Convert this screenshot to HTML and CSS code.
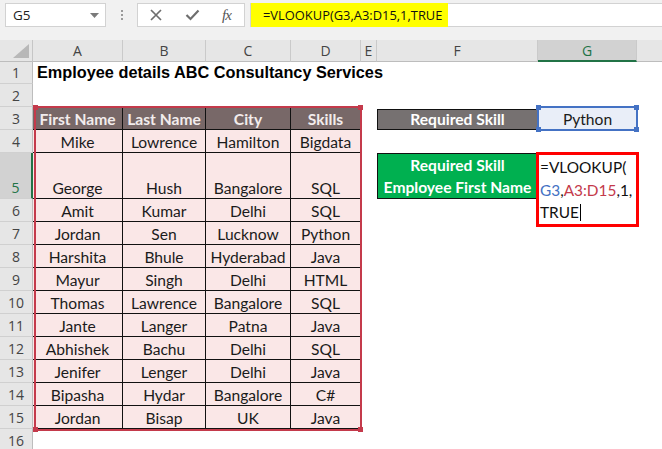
FILE: index.html
```html
<!DOCTYPE html>
<html>
<head>
<meta charset="utf-8">
<link rel="stylesheet" href="styles.css">
</head>
<body>
<div class="app">
  <div class="toolbar">
    <div class="namebox"><span class="ref">G5</span><svg class="caret" width="9" height="5" viewBox="0 0 9 5"><path d="M0 0h9L4.5 5z" fill="#7a7a7a"/></svg></div>
    <div class="grip"><i></i><i></i><i></i></div>
    <div class="fnbox">
      <svg class="ico-x" width="12" height="12" viewBox="0 0 12 12"><path d="M1 1L11 11M11 1L1 11" stroke="#6e6e6e" stroke-width="1.7" fill="none"/></svg>
      <svg class="ico-ok" width="15" height="12" viewBox="0 0 15 12"><path d="M1.5 6L5.5 10L13.5 1.5" stroke="#6e6e6e" stroke-width="2.2" fill="none"/></svg>
      <span class="fx">fx</span>
    </div>
    <div class="formula"><span class="hl">=VLOOKUP(G3,A3:D15,1,TRUE</span></div>
  </div>

  <div class="sheet">
    <div class="row hdr">
      <div class="corner"><svg width="16" height="14" viewBox="0 0 16 14"><path d="M16 0V14H0z" fill="#b8b8b8"/></svg></div>
      <div class="ch">A</div><div class="ch">B</div><div class="ch">C</div><div class="ch">D</div><div class="ch">E</div><div class="ch">F</div><div class="ch sel">G</div><div class="ch last"></div>
    </div>
    <div class="row r22"><div class="rh">1</div><div class="title">Employee details ABC Consultancy Services</div></div>
    <div class="row"><div class="rh">2</div></div>
    <div class="row">
      <div class="rh">3</div>
      <div class="t th">First Name</div><div class="t th">Last Name</div><div class="t th">City</div><div class="t th">Skills</div>
      <div class="cf lbl gray">Required Skill</div>
      <div class="cg py">Python</div>
    </div>
    <div class="row"><div class="rh">4</div><div class="t">Mike</div><div class="t">Lowrence</div><div class="t">Hamilton</div><div class="t">Bigdata</div></div>
    <div class="row r46">
      <div class="rh sel">5</div><div class="t">George</div><div class="t">Hush</div><div class="t">Bangalore</div><div class="t">SQL</div>
      <div class="cf lbl green"><span>Required Skill</span><span>Employee First Name</span></div>
    </div>
    <div class="row"><div class="rh">6</div><div class="t">Amit</div><div class="t">Kumar</div><div class="t">Delhi</div><div class="t">SQL</div></div>
    <div class="row"><div class="rh">7</div><div class="t">Jordan</div><div class="t">Sen</div><div class="t">Lucknow</div><div class="t">Python</div></div>
    <div class="row"><div class="rh">8</div><div class="t">Harshita</div><div class="t">Bhule</div><div class="t">Hyderabad</div><div class="t">Java</div></div>
    <div class="row"><div class="rh">9</div><div class="t">Mayur</div><div class="t">Singh</div><div class="t">Delhi</div><div class="t">HTML</div></div>
    <div class="row"><div class="rh">10</div><div class="t">Thomas</div><div class="t">Lawrence</div><div class="t">Bangalore</div><div class="t">SQL</div></div>
    <div class="row"><div class="rh">11</div><div class="t">Jante</div><div class="t">Langer</div><div class="t">Patna</div><div class="t">Java</div></div>
    <div class="row"><div class="rh">12</div><div class="t">Abhishek</div><div class="t">Bachu</div><div class="t">Delhi</div><div class="t">SQL</div></div>
    <div class="row"><div class="rh">13</div><div class="t">Jenifer</div><div class="t">Lenger</div><div class="t">Delhi</div><div class="t">Java</div></div>
    <div class="row"><div class="rh">14</div><div class="t">Bipasha</div><div class="t">Hydar</div><div class="t">Bangalore</div><div class="t">C#</div></div>
    <div class="row"><div class="rh">15</div><div class="t">Jordan</div><div class="t">Bisap</div><div class="t">UK</div><div class="t">Java</div></div>
    <div class="row"><div class="rh">16</div></div>

    <div class="range"><i class="h tl"></i><i class="h tr"></i><i class="h bl"></i><i class="h br"></i></div>
    <div class="selbox"><i class="h tl"></i><i class="h tr"></i><i class="h bl"></i><i class="h br"></i></div>
    <div class="edit">
      <div>=VLOOKUP(</div>
      <div><span class="blue">G3</span>,<span class="red">A3:D15</span>,1,</div>
      <div>TRUE<span class="cursor"></span></div>
    </div>
  </div>
</div>
</body>
</html>
```

FILE: styles.css
```css
* { box-sizing: border-box; }
html, body { margin: 0; padding: 0; }
body { width: 662px; height: 449px; overflow: hidden; background: #fff; font-family: "Lato", "Liberation Sans", sans-serif; }

.app { width: 662px; }

.toolbar {
  height: 40px;
  background: #f1f1f1;
  display: flex;
  align-items: flex-start;
  padding-top: 3px;
}
.namebox {
  margin-left: 5px;
  width: 101px;
  height: 24px;
  background: #fff;
  border: 1px solid #d2d2d2;
  display: flex;
  align-items: center;
  justify-content: space-between;
  padding: 0 6px 0 7px;
  font: 13.5px "Open Sans", sans-serif;
  color: #222;
}
.grip {
  width: 31px;
  height: 24px;
  display: flex;
  flex-direction: column;
  align-items: center;
  justify-content: center;
  gap: 2px;
}
.grip i { display: block; width: 2px; height: 2px; background: #9a9a9a; }
.fnbox {
  width: 108px;
  height: 24px;
  background: #fff;
  border: 1px solid #d2d2d2;
  display: flex;
  align-items: center;
  padding-left: 12px;
}
.ico-ok { margin-left: 23px; }
.fx {
  margin-left: 22px;
  font: italic 15px "Liberation Serif", serif;
  color: #555;
  letter-spacing: -1px;
}
.formula {
  margin-left: 5px;
  flex: 1;
  height: 24px;
  background: #fff;
  border: 1px solid #d2d2d2;
  border-right: none;
}
.hl {
  display: flex;
  align-items: center;
  width: 197px;
  height: 24px;
  margin-top: -1px;
  background: #ffff00;
  padding-left: 12px;
  font: 12.9px "Open Sans", sans-serif;
  color: #111;
  white-space: nowrap;
}

.sheet { position: relative; }
.row {
  display: grid;
  grid-template-columns: 33px 90px 83px 85px 70px 16px 161px 99px 1fr;
  grid-template-rows: 100%;
  height: 23px;
}
.row.r22 { height: 22px; }
.row.r46 { height: 46px; }
.row.hdr { height: 22px; background: #e6e6e6; }

.corner {
  border-right: 1px solid #c6c6c6;
  border-bottom: 1px solid #bdbdbd;
  display: flex;
  align-items: flex-end;
  justify-content: flex-end;
  padding: 0 3px 3px 0;
}
.ch {
  border-right: 1px solid #cacaca;
  border-bottom: 1px solid #bdbdbd;
  display: flex;
  align-items: center;
  justify-content: center;
  font: 14px "Open Sans", sans-serif;
  color: #444;
}
.ch.last { border-right: none; }
.ch.sel { background: #d2d2d2; color: #217346; border-bottom: 2px solid #217346; }

.rh {
  grid-column: 1;
  background: #e6e6e6;
  border-right: 1px solid #bdbdbd;
  border-bottom: 1px solid #d0d0d0;
  display: flex;
  align-items: flex-end;
  justify-content: center;
  padding-bottom: 1px;
  font: 14px "Open Sans", sans-serif;
  color: #444;
}
.rh.sel { background: #d2d2d2; color: #217346; border-right: 2px solid #217346; }

.title {
  grid-column: 2 / -1;
  display: flex;
  align-items: flex-end;
  padding: 0 0 2px 4px;
  font: bold 16.3px "Liberation Sans", Arial, sans-serif;
  color: #000;
  white-space: nowrap;
}

.t {
  background: #fae7e7;
  border-right: 1px solid #111;
  border-bottom: 1px solid #111;
  display: flex;
  align-items: flex-end;
  justify-content: center;
  padding-bottom: 1px;
  font-size: 15.6px;
  color: #1b1b1b;
  white-space: nowrap;
}
.t.th {
  background: #786868;
  color: #f2ecec;
  font-weight: bold;
}

.cf { grid-column: 7; }
.cg { grid-column: 8; }
.lbl {
  border: 1px solid #111;
  color: #fff;
  font-weight: bold;
  font-size: 15.6px;
  display: flex;
  flex-direction: column;
  align-items: center;
  justify-content: flex-end;
  white-space: nowrap;
}
.lbl.gray { background: #767171; margin-top: 2px; padding-bottom: 1px; }
.lbl.green { background: #00b050; justify-content: center; line-height: 22px; padding-bottom: 1px; }
.py {
  background: #e9eef8;
  display: flex;
  align-items: flex-end;
  justify-content: center;
  padding-bottom: 2px;
  font-size: 15.6px;
  color: #1b1b1b;
}

.range {
  position: absolute;
  left: 34px; top: 66px; width: 328px; height: 325px;
  border: 2px solid #c43a4b;
}
.selbox {
  position: absolute;
  left: 537px; top: 66px; width: 101px; height: 25px;
  border: 2px solid #4472c4;
}
.h { position: absolute; width: 5px; height: 5px; }
.range .h { background: #c43a4b; }
.selbox .h { background: #4472c4; }
.h.tl { left: -3px; top: -3px; }
.h.tr { right: -3px; top: -3px; }
.h.bl { left: -3px; bottom: -3px; }
.h.br { right: -3px; bottom: -3px; }

.edit {
  position: absolute;
  left: 536px; top: 112px; width: 103px; height: 75px;
  border: 3px solid #ff0000;
  background: #fff;
  padding: 1px 0 0 1px;
  font-size: 15.4px;
  line-height: 22.5px;
  color: #111;
  white-space: nowrap;
}
.blue { color: #4472c4; }
.red { color: #c43a4b; }
.cursor { display: inline-block; width: 1px; height: 17px; background: #000; vertical-align: -3px; margin-left: 1px; }
```
